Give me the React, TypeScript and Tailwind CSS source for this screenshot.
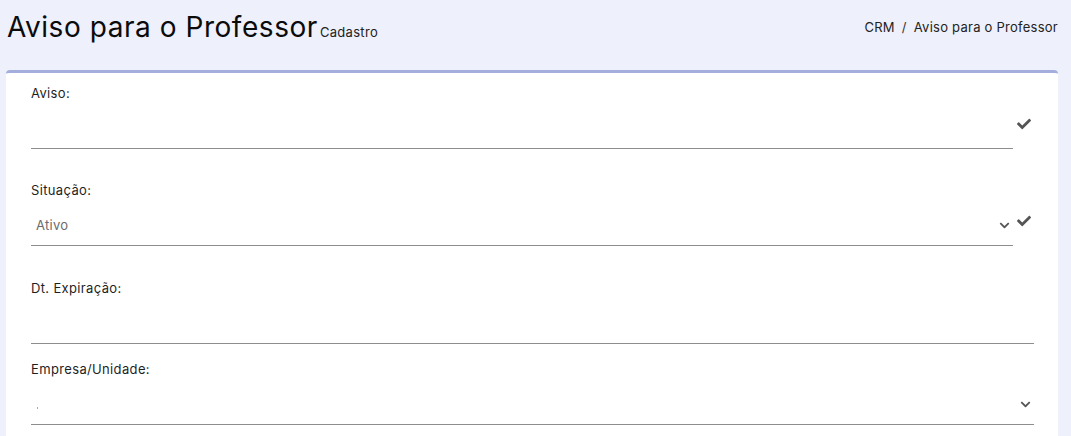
import { FaCheck, FaChevronDown } from "react-icons/fa";

type FieldProps = {
  label: string;
  children?: React.ReactNode;
  select?: boolean;
  check?: boolean;
  className?: string;
};

function Field({ label, children, select, check, className = "" }: FieldProps) {
  return (
    <div className={`flex ${className}`}>
      <div className="min-w-0 flex-1">
        <label className="block h-5 text-[13px] leading-5 tracking-[0.35px] text-[#1f1f1f]">{label}</label>
        <div className="mt-1.5 flex h-10 items-center border-b border-[#8d8d8d] pl-[5px] pr-[3px]">
          <div className="min-w-0 flex-1 text-[13px] tracking-[0.3px] text-[#6b6b6b]">{children}</div>
          {select && <FaChevronDown className="h-[11px] w-[11px] text-[#555]" />}
        </div>
      </div>
      {check && (
        <div className="flex w-[21px] shrink-0 justify-center pt-[34px]">
          <FaCheck className="h-[14px] w-[14px] text-[#555]" />
        </div>
      )}
    </div>
  );
}

export default function App() {
  return (
    <div className="min-h-[436px] bg-[#eef0fb] pl-[6px] pr-[13px] font-['Inter',sans-serif]">
      <header className="flex h-[70px] items-center justify-between pb-[14px] pl-[1px]">
        <div className="flex items-baseline">
          <h1 className="text-[28px] font-normal leading-none tracking-[0.55px] text-[#0b0b0b]">Aviso para o Professor</h1>
          <span className="ml-[2px] text-[13px] tracking-[0.3px] text-[#222]">Cadastro</span>
        </div>
        <nav className="flex items-center text-[13px] tracking-[0.25px] text-[#222]">
          <span>CRM</span>
          <span className="mx-[7px] text-[#333]">/</span>
          <span>Aviso para o Professor</span>
        </nav>
      </header>

      <section className="rounded-t-[4px] border-t-[3px] border-[#a3aedd] bg-white px-[25px] pb-4 pr-[24px] pt-[10px]">
        <Field label="Aviso:" check />
        <Field label="Situação:" select check className="mt-[31px]">
          Ativo
        </Field>
        <Field label="Dt. Expiração:" className="mt-[32px]" />
        <Field label="Empresa/Unidade:" select className="mt-[15px]">
          <span className="ml-px mt-[6px] block h-[2px] w-px bg-[#d9a15a]" />
        </Field>
      </section>
    </div>
  );
}
